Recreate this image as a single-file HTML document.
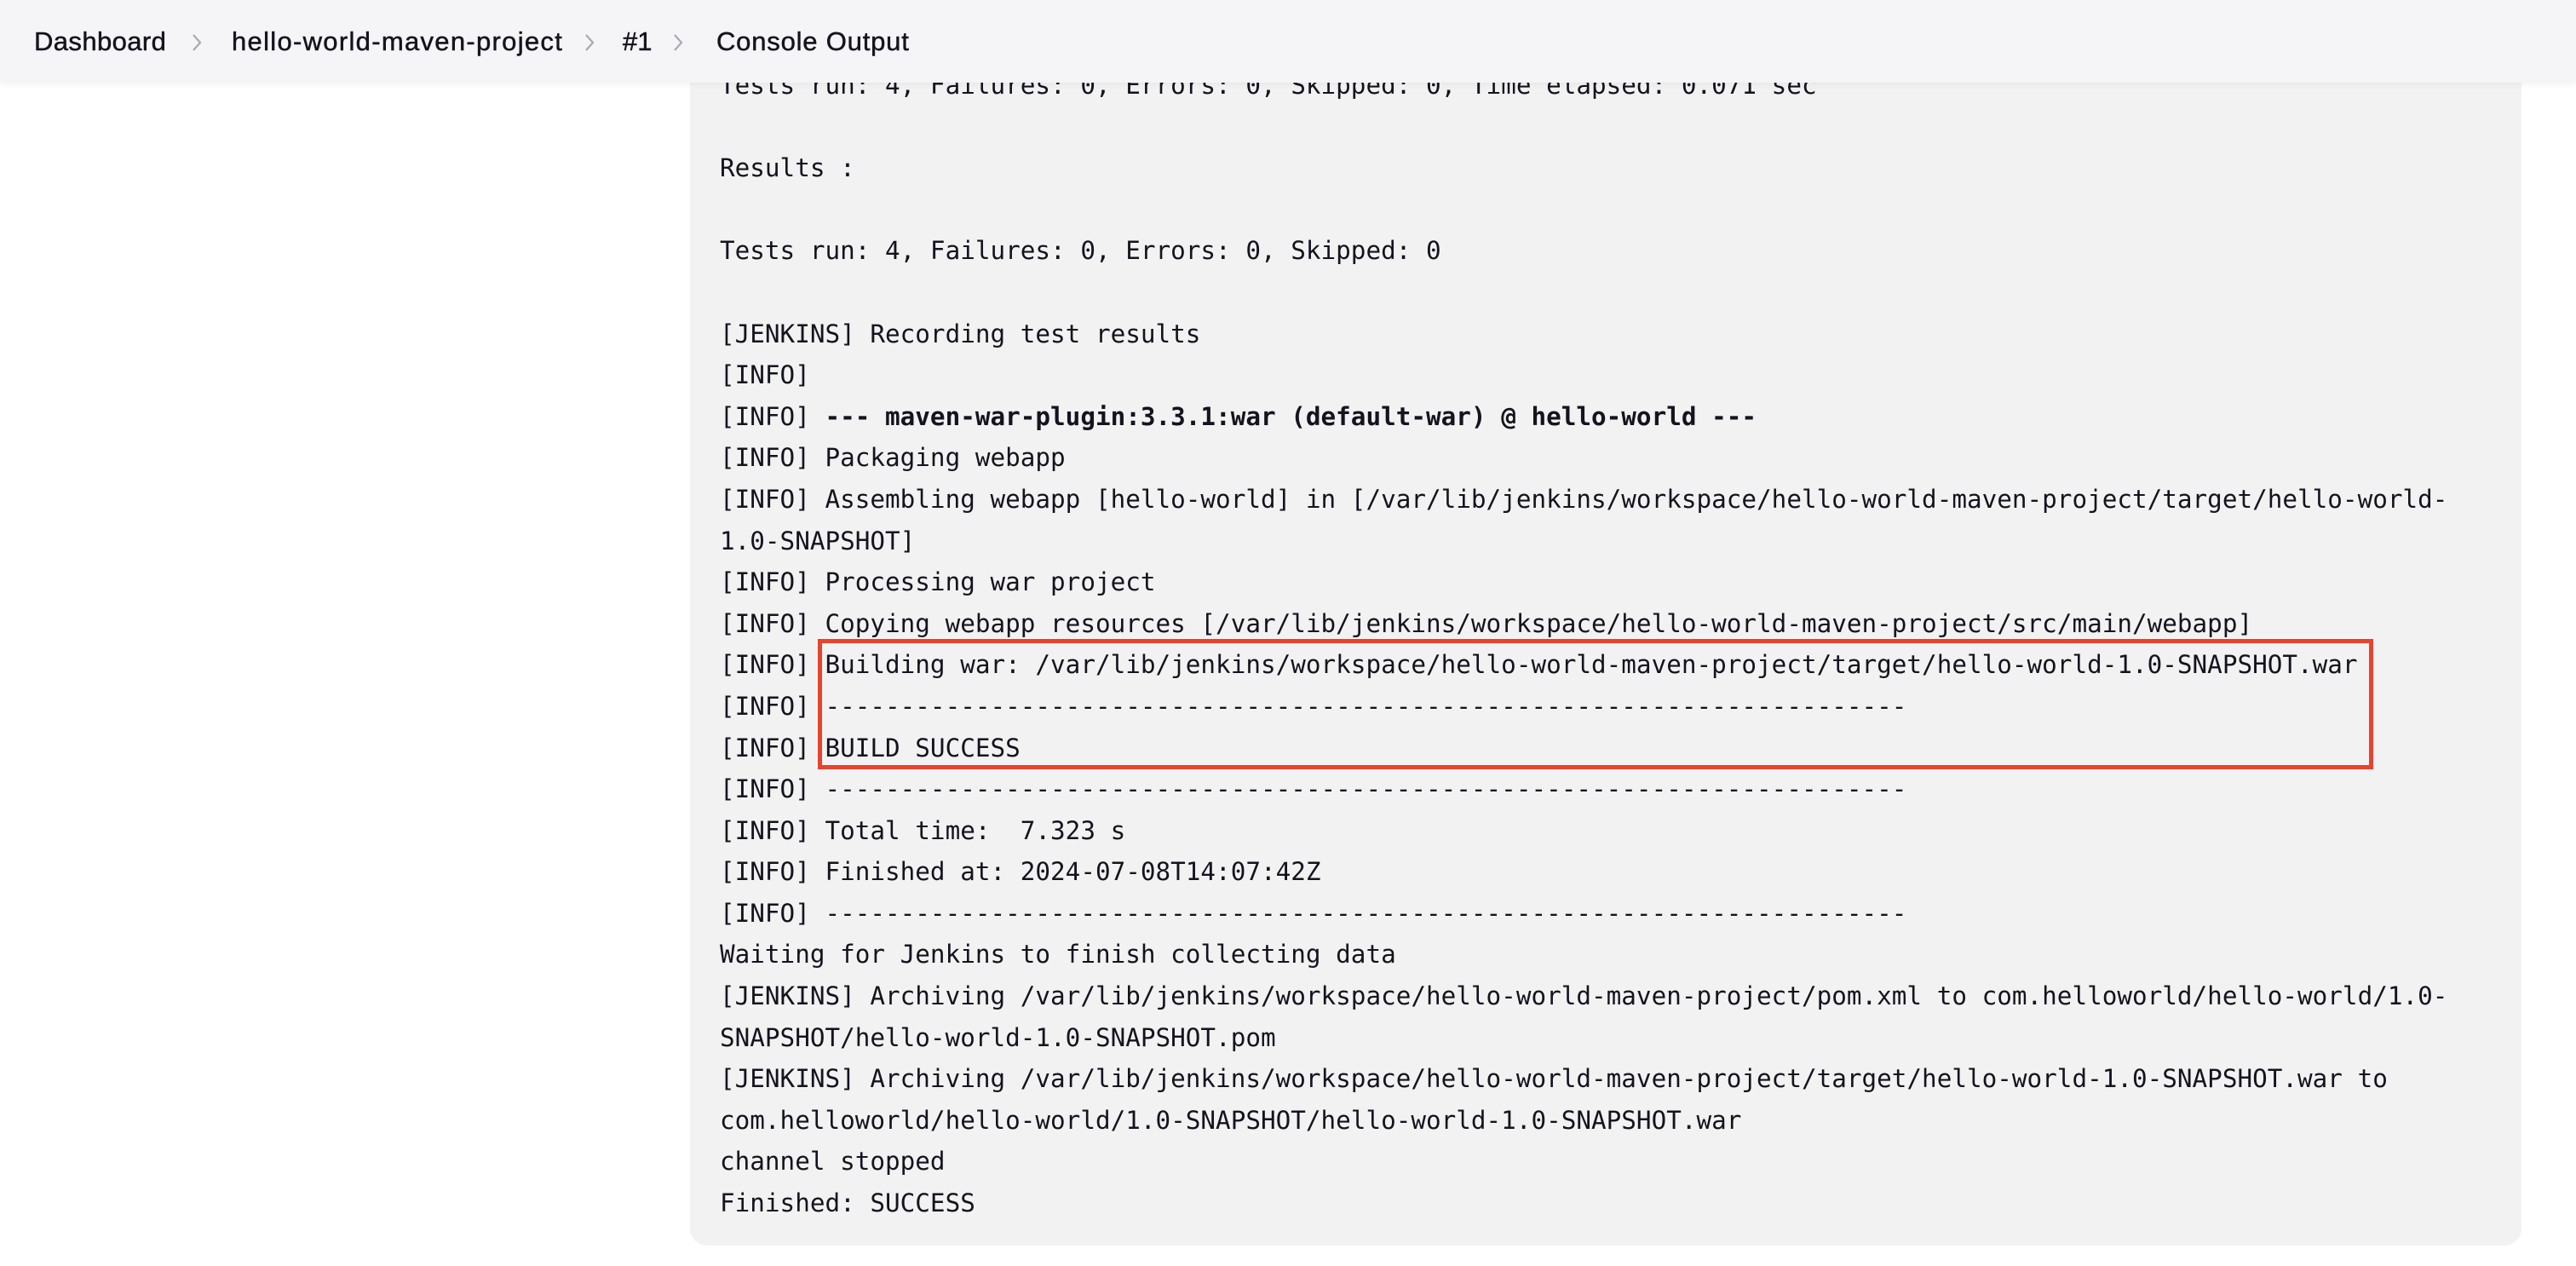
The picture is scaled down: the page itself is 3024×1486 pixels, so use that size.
<!DOCTYPE html>
<html><head><meta charset="utf-8"><style>
html,body{margin:0;padding:0;width:3024px;height:1486px;overflow:hidden;background:#fff;}
.box{position:absolute;left:810px;top:0;width:2150px;height:1462px;background:#f2f2f2;border-radius:0 0 20px 20px;}
pre{position:absolute;left:845px;top:76px;margin:0;font-family:"DejaVu Sans Mono","Liberation Mono",monospace;font-size:29.3px;line-height:48.6px;color:#14141f;white-space:pre;}
.hdr{position:absolute;left:0;top:0;width:3024px;height:97px;background:#f5f5f7;box-shadow:0 2px 8px rgba(0,0,0,0.05);}
.hdr span{position:absolute;top:31px;font-family:"Liberation Sans",sans-serif;font-size:31px;color:#14141f;-webkit-text-stroke:0.5px #14141f;}
.hdr svg{position:absolute;top:38px;}
.red{position:absolute;left:960px;top:750px;width:1826px;height:153px;border:5px solid #e8432d;box-sizing:border-box;}
</style></head><body>
<div class="box"></div>
<pre>Tests run: 4, Failures: 0, Errors: 0, Skipped: 0, Time elapsed: 0.071 sec

Results :

Tests run: 4, Failures: 0, Errors: 0, Skipped: 0

[JENKINS] Recording test results
[INFO] 
[INFO] <b>--- maven-war-plugin:3.3.1:war (default-war) @ hello-world ---</b>
[INFO] Packaging webapp
[INFO] Assembling webapp [hello-world] in [/var/lib/jenkins/workspace/hello-world-maven-project/target/hello-world-
1.0-SNAPSHOT]
[INFO] Processing war project
[INFO] Copying webapp resources [/var/lib/jenkins/workspace/hello-world-maven-project/src/main/webapp]
[INFO] Building war: /var/lib/jenkins/workspace/hello-world-maven-project/target/hello-world-1.0-SNAPSHOT.war
[INFO] ------------------------------------------------------------------------
[INFO] BUILD SUCCESS
[INFO] ------------------------------------------------------------------------
[INFO] Total time:  7.323 s
[INFO] Finished at: 2024-07-08T14:07:42Z
[INFO] ------------------------------------------------------------------------
Waiting for Jenkins to finish collecting data
[JENKINS] Archiving /var/lib/jenkins/workspace/hello-world-maven-project/pom.xml to com.helloworld/hello-world/1.0-
SNAPSHOT/hello-world-1.0-SNAPSHOT.pom
[JENKINS] Archiving /var/lib/jenkins/workspace/hello-world-maven-project/target/hello-world-1.0-SNAPSHOT.war to
com.helloworld/hello-world/1.0-SNAPSHOT/hello-world-1.0-SNAPSHOT.war
channel stopped
Finished: SUCCESS</pre>
<div class="red"></div>
<div class="hdr">
<span style="left:40px;letter-spacing:0.4px">Dashboard</span>
<svg style="left:224px" width="14" height="24" viewBox="0 0 14 24"><path d="M3 3 L11 12 L3 21" fill="none" stroke="#a8a8b0" stroke-width="2.2"/></svg>
<span style="left:272px;letter-spacing:1.3px">hello-world-maven-project</span>
<svg style="left:685px" width="14" height="24" viewBox="0 0 14 24"><path d="M3 3 L11 12 L3 21" fill="none" stroke="#a8a8b0" stroke-width="2.2"/></svg>
<span style="left:731px">#1</span>
<svg style="left:789px" width="14" height="24" viewBox="0 0 14 24"><path d="M3 3 L11 12 L3 21" fill="none" stroke="#a8a8b0" stroke-width="2.2"/></svg>
<span style="left:841px;letter-spacing:0.8px">Console Output</span>
</div>
</body></html>
